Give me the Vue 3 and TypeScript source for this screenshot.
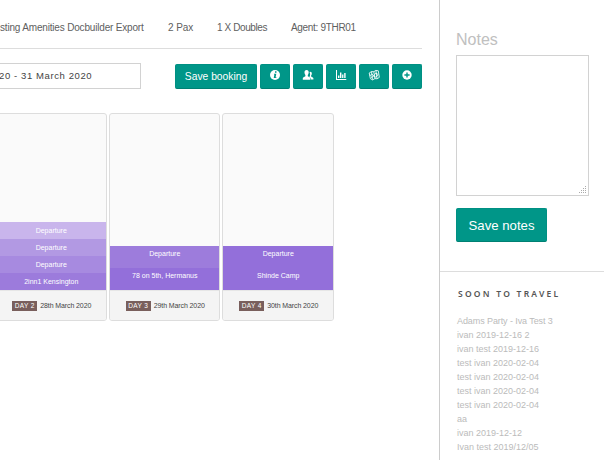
<script setup lang="ts">
interface Stop { label: string; color: string }
interface Day { label: string; date: string; size: string; stops: Stop[] }

const days: Day[] = [
  {
    label: 'DAY 2', date: '28th March 2020', size: 'short',
    stops: [
      { label: 'Departure', color: '#c9b5ec' },
      { label: 'Departure', color: '#b299e3' },
      { label: 'Departure', color: '#a78ae0' },
      { label: '2inn1 Kensington', color: '#9c7bdc' },
    ],
  },
  {
    label: 'DAY 3', date: '29th March 2020', size: 'tall',
    stops: [
      { label: 'Departure', color: '#9d7cdc' },
      { label: '78 on 5th, Hermanus', color: '#936fda' },
    ],
  },
  {
    label: 'DAY 4', date: '30th March 2020', size: 'tall',
    stops: [
      { label: 'Departure', color: '#936fda' },
      { label: 'Shinde Camp', color: '#936fda' },
    ],
  },
]

const trips: string[] = [
  'Adams Party - Iva Test 3', 'ivan 2019-12-16 2', 'ivan test 2019-12-16',
  'test ivan 2020-02-04', 'test ivan 2020-02-04', 'test ivan 2020-02-04',
  'test ivan 2020-02-04', 'aa', 'ivan 2019-12-12', 'Ivan test 2019/12/05',
]
</script>

<template>
  <div class="page">
    <main class="main">
      <header class="summary">
        <span class="name">sting Amenities Docbuilder Export</span>
        <span class="pax">2 Pax</span>
        <span class="rooms">1 X Doubles</span>
        <span class="agent">Agent: 9THR01</span>
      </header>
      <div class="toolbar">
        <div class="dates">20 - 31 March 2020</div>
        <button class="btn save">Save booking</button>
        <button class="btn icon" aria-label="Info">
          <svg viewBox="0 0 12 12"><circle cx="6" cy="6" r="5" fill="#fff" /><path d="M6 2.3h1.5v1.5H6zM5 4.8h2.3L6.6 8.2h.8V9H4.7l.7-3.4H5z" fill="#009688" /></svg>
        </button>
        <button class="btn icon" aria-label="Travellers">
          <svg viewBox="0 0 12 12" fill="#fff"><path d="M8.300 2.800c1 0 1.600.7 1.500 1.900 0 .8-.3 1.400-.7 1.800v1l1.700.9c.5.3.6.6.6 1.200v1H9c0-1.200-.3-1.700-1-2.200l-.6-.4c.9-1.300 1-3.300.1-5z" /><path d="M4.600 1c1.500 0 2.200 1 2.100 2.800-.1 1-.4 1.800-.9 2.300v1.100l1.800 1c.6.300.8.700.8 1.300v1.300H.8V9.500c0-.6.2-1 .8-1.300l1.800-1V6.100c-.5-.5-.8-1.300-.9-2.300C2.400 2 3.100 1 4.600 1z" /></svg>
        </button>
        <button class="btn icon" aria-label="Statistics">
          <svg viewBox="0 0 12 12" fill="#fff"><path d="M1 1h1v9h9.300v1H1zM3 6.500h1.400V9H3zM5 3.500h1.400V9H5zM7.100 5.500h1.300V9H7.100zM9.200 4h1.400v5H9.200z" /></svg>
        </button>
        <button class="btn icon" aria-label="Map">
          <svg viewBox="0 0 12 12" fill="none" stroke="#fff" stroke-width=".85"><path d="M1.200 4l2.300-1.400 2.300.1 2.100-1.300 2.400.4 1 6.600-2.200 1.400-2.200-.2-2.300 1.300-2.200-1.200zM3.500 2.600l1 8M5.800 2.700l1.100 6.900M7.900 1.400l1.200 8.300M1.800 7l2-2.200L5.700 7l2-3 2.500 1.500M3 8.500l2.500-1.200 2.500.9 2-2.500" /></svg>
        </button>
        <button class="btn icon" aria-label="Add">
          <svg viewBox="0 0 12 12"><circle cx="6" cy="6" r="4.700" fill="#fff" /><path d="M6 3.400v5.200M3.400 6h5.200" stroke="#009688" stroke-width="1.400" /></svg>
        </button>
      </div>
      <section class="days">
        <article v-for="day in days" :key="day.label" class="day">
          <div class="stops" :class="day.size">
            <div v-for="(stop, i) in day.stops" :key="i" class="stop" :style="{ background: stop.color }">{{ stop.label }}</div>
          </div>
          <footer class="foot"><span class="tag">{{ day.label }}</span><span class="date">{{ day.date }}</span></footer>
        </article>
      </section>
    </main>
    <aside class="side">
      <section class="notes">
        <h2>Notes</h2>
        <div class="area">
          <svg class="grip" viewBox="0 0 8 8" fill="#aaa"><path d="M6 0h1v1H6zM4 2h1v1H4zM6 2h1v1H6zM2 4h1v1H2zM4 4h1v1H4zM6 4h1v1H6zM0 6h1v1H0zM2 6h1v1H2zM4 6h1v1H4zM6 6h1v1H6z" /></svg>
        </div>
        <button class="btn save-notes">Save notes</button>
      </section>
      <section class="soon">
        <h3>SOON TO TRAVEL</h3>
        <ul><li v-for="(trip, i) in trips" :key="i">{{ trip }}</li></ul>
      </section>
    </aside>
  </div>
</template>

<style>
body { margin: 0; background: #fff; }
</style>

<style scoped>
* { box-sizing: border-box; }
.page { display: flex; width: 604px; height: 460px; overflow: hidden; font-family: "Liberation Sans", sans-serif; background: #fff; }
.main { width: 439px; flex: none; overflow: hidden; }
.summary { display: flex; width: 422px; height: 49px; padding-top: 21px; border-bottom: 1px solid #ddd; font-size: 10px; line-height: 14px; color: #606060; white-space: nowrap; }
.name { width: 168px; letter-spacing: -.18px; }
.pax { width: 49px; letter-spacing: -.1px; }
.rooms { width: 74px; letter-spacing: -.4px; }
.agent { letter-spacing: -.32px; }
.toolbar { display: flex; height: 25px; margin-top: 15px; gap: 3px; }
.dates { width: 141px; height: 26px; margin: -1px 31px 0 0; border: 1px solid #d2d2d2; border-left: 0; font-size: 9.500px; line-height: 24px; letter-spacing: .6px; text-indent: -1px; color: #444; white-space: nowrap; }
.btn { display: flex; align-items: center; justify-content: center; padding: 0; border: 1px solid #009083; border-bottom-color: #008073; border-radius: 2px; background: #009688; color: #fff; font-family: inherit; white-space: nowrap; }
.save { width: 82px; font-size: 10.300px; }
.icon { width: 30px; height: 25px; flex: none; padding-bottom: 3px; }
.icon svg { width: 12px; height: 12px; }
.days { display: flex; gap: 2px; margin: 24px 0 0 -5px; }
.day { width: 111.500px; height: 208px; flex: none; border: 1px solid #ddd; border-radius: 3px; background: #fafafa; overflow: hidden; }
.stops { display: flex; flex-direction: column; justify-content: flex-end; height: 176px; }
.stop { height: 17px; padding-left: 1px; font-size: 7px; line-height: 17px; color: #fff; text-align: center; }
.tall .stop { height: 22px; line-height: 16px; }
.foot { display: flex; align-items: center; justify-content: center; gap: 3px; height: 30px; padding-left: 2px; border-top: 1px solid #e6e6e6; background: #f4f4f4; font-size: 7px; color: #444; white-space: nowrap; }
.date { letter-spacing: -.1px; }
.tag { width: 25px; height: 10px; background: #795f5c; color: #fff; font-size: 6.500px; line-height: 10px; letter-spacing: .35px; text-align: center; }
.side { width: 165px; flex: none; border-left: 1px solid #ccc; }
.notes { height: 272px; padding: 30px 0 0 16px; border-bottom: 1px solid #ddd; }
h2 { margin: 0; font-size: 16px; line-height: 20px; font-weight: normal; color: #c0c0c0; }
.area { display: flex; align-items: flex-end; justify-content: flex-end; width: 133px; height: 141px; margin-top: 5px; padding: 1px; border: 1px solid #d2d2d2; }
.grip { width: 8px; height: 8px; }
.save-notes { width: 91px; height: 34px; margin-top: 12px; font-size: 13.200px; }
.soon { padding: 16px 0 0 17px; }
h3 { margin: 0 0 0 1px; font-family: "Noto Sans", sans-serif; font-size: 8.500px; font-weight: 600; line-height: 12px; letter-spacing: 2.250px; color: #555; white-space: nowrap; }
ul { margin: 14px 0 0; padding: 0; list-style: none; font-size: 9px; color: #bbb; }
li { height: 14px; line-height: 14px; white-space: nowrap; }
li:first-child { letter-spacing: -.09px; }
</style>
